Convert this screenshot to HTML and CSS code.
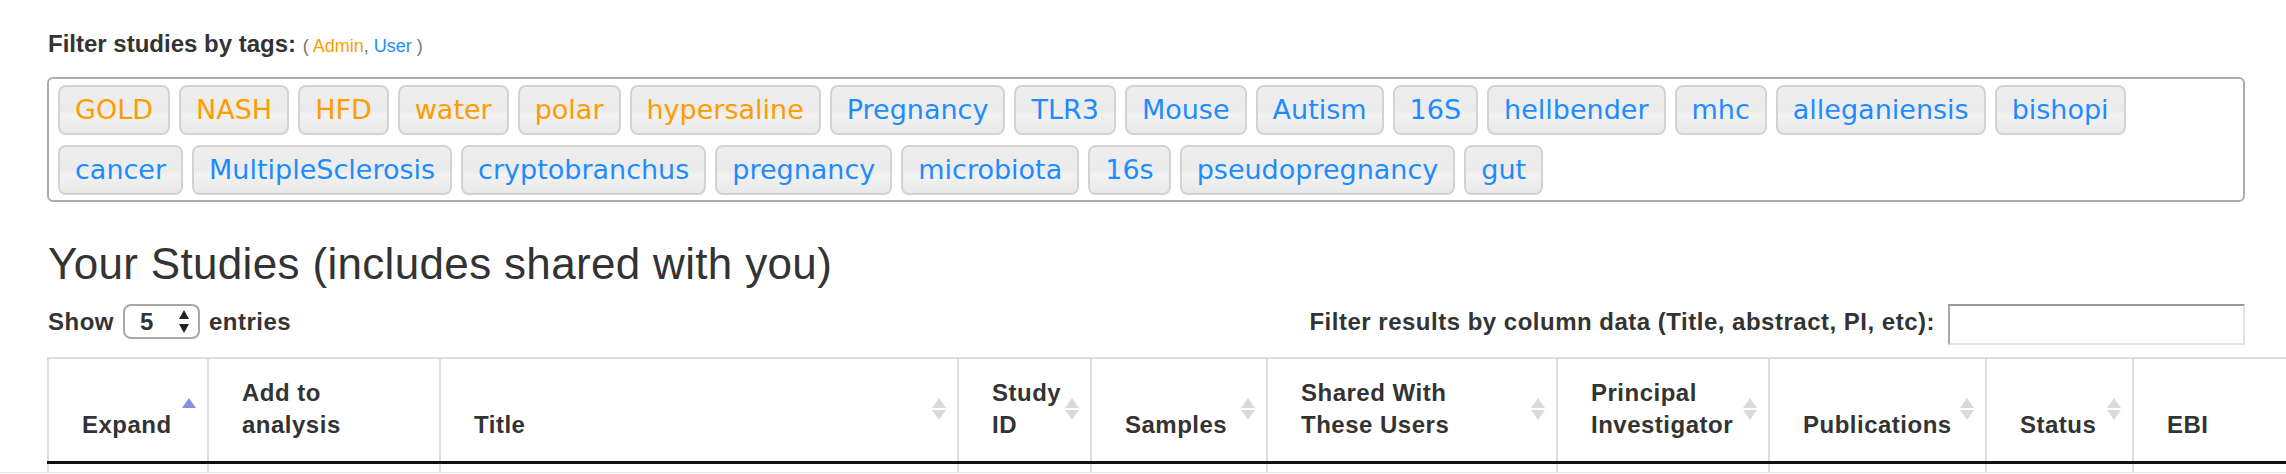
FILE: index.html
```html
<!DOCTYPE html>
<html lang="en">
<head>
<meta charset="utf-8">
<title>Your Studies</title>
<link rel="stylesheet" href="styles.css">
</head>
<body>
<div class="page">
  <div class="tag-label">Filter studies by tags: <span class="tag-legend">( <span class="role-admin">Admin</span>, <span class="role-user">User</span> )</span></div>
  <div class="tag-box">
    <span class="tag role-admin">GOLD</span>
    <span class="tag role-admin">NASH</span>
    <span class="tag role-admin">HFD</span>
    <span class="tag role-admin">water</span>
    <span class="tag role-admin">polar</span>
    <span class="tag role-admin">hypersaline</span>
    <span class="tag role-user">Pregnancy</span>
    <span class="tag role-user">TLR3</span>
    <span class="tag role-user">Mouse</span>
    <span class="tag role-user">Autism</span>
    <span class="tag role-user">16S</span>
    <span class="tag role-user">hellbender</span>
    <span class="tag role-user">mhc</span>
    <span class="tag role-user">alleganiensis</span>
    <span class="tag role-user">bishopi</span>
    <span class="tag role-user">cancer</span>
    <span class="tag role-user">MultipleSclerosis</span>
    <span class="tag role-user">cryptobranchus</span>
    <span class="tag role-user">pregnancy</span>
    <span class="tag role-user">microbiota</span>
    <span class="tag role-user">16s</span>
    <span class="tag role-user">pseudopregnancy</span>
    <span class="tag role-user">gut</span>
  </div>

  <h3 class="studies-title">Your Studies (includes shared with you)</h3>

  <div class="table-controls">
    <div class="length">Show<span class="select"><span class="select-value">5</span><svg class="select-arrows" width="10" height="23" viewBox="0 0 10 23"><polygon points="0,9 5,0 10,9" fill="#222"/><polygon points="0,14 10,14 5,23" fill="#222"/></svg></span>entries</div>
    <div class="search">Filter results by column data (Title, abstract, PI, etc):<span class="search-input"></span></div>
  </div>

  <table class="studies">
    <colgroup>
      <col class="c-expand"><col class="c-add"><col class="c-title"><col class="c-id"><col class="c-samples"><col class="c-shared"><col class="c-pi"><col class="c-pub"><col class="c-status"><col class="c-ebi">
    </colgroup>
    <thead>
      <tr>
        <th>Expand<svg class="sort" width="14" height="22" viewBox="0 0 14 22"><polygon points="0,10 7,0 14,10" fill="#8b8fe3"/></svg></th>
        <th>Add to<br>analysis<svg class="sort" width="14" height="22" viewBox="0 0 14 22"></svg></th>
        <th>Title<svg class="sort" width="14" height="22" viewBox="0 0 14 22"><polygon points="0,10 7,0 14,10" fill="#dadada"/><polygon points="0,12 14,12 7,22" fill="#dadada"/></svg></th>
        <th>Study<br>ID<svg class="sort" width="14" height="22" viewBox="0 0 14 22"><polygon points="0,10 7,0 14,10" fill="#dadada"/><polygon points="0,12 14,12 7,22" fill="#dadada"/></svg></th>
        <th>Samples<svg class="sort" width="14" height="22" viewBox="0 0 14 22"><polygon points="0,10 7,0 14,10" fill="#dadada"/><polygon points="0,12 14,12 7,22" fill="#dadada"/></svg></th>
        <th>Shared With<br>These Users<svg class="sort" width="14" height="22" viewBox="0 0 14 22"><polygon points="0,10 7,0 14,10" fill="#dadada"/><polygon points="0,12 14,12 7,22" fill="#dadada"/></svg></th>
        <th>Principal<br>Investigator<svg class="sort" width="14" height="22" viewBox="0 0 14 22"><polygon points="0,10 7,0 14,10" fill="#dadada"/><polygon points="0,12 14,12 7,22" fill="#dadada"/></svg></th>
        <th>Publications<svg class="sort" width="14" height="22" viewBox="0 0 14 22"><polygon points="0,10 7,0 14,10" fill="#dadada"/><polygon points="0,12 14,12 7,22" fill="#dadada"/></svg></th>
        <th>Status<svg class="sort" width="14" height="22" viewBox="0 0 14 22"><polygon points="0,10 7,0 14,10" fill="#dadada"/><polygon points="0,12 14,12 7,22" fill="#dadada"/></svg></th>
        <th>EBI<svg class="sort" width="14" height="22" viewBox="0 0 14 22"><polygon points="0,10 7,0 14,10" fill="#dadada"/><polygon points="0,12 14,12 7,22" fill="#dadada"/></svg></th>
      </tr>
    </thead>
    <tbody>
      <tr><td></td><td></td><td></td><td></td><td></td><td></td><td></td><td></td><td></td><td></td></tr>
    </tbody>
  </table>
</div>
<div class="bottom-rule"></div>
</body>
</html>
```

FILE: styles.css
```css
* { box-sizing: border-box; }

html, body {
  margin: 0;
  overflow: hidden;
  background: #fff;
}

body {
  font-family: "Liberation Sans", Arial, Helvetica, sans-serif;
  color: #333;
}

.page {
  padding: 29px 41px 0 47px;
}

.tag-label {
  font-size: 24px;
  line-height: 30px;
  font-weight: bold;
  margin: 0 0 16px 1px;
}

.tag-legend {
  font-size: 18px;
  font-weight: normal;
  color: #777;
}

.role-admin { color: #ff9c00; }
.role-user { color: #1e8cff; }

.tag-box {
  display: flex;
  flex-wrap: wrap;
  gap: 10px 9px;
  border: 2px solid #acacac;
  border-radius: 6px;
  padding: 6px 9px 5px;
}

.tag {
  font-family: "DejaVu Sans", Verdana, sans-serif;
  font-size: 27px;
  line-height: 46px;
  padding: 0 15px;
  border: 2px solid #d3d3d3;
  border-radius: 8px;
  background: linear-gradient(to bottom, #eeeeee 0%, #ebebeb 52%, #f2f2f2 60%, #e9e9e9 100%);
}

.studies-title {
  margin: 37px 0 15px 1px;
  font-size: 44px;
  line-height: 50px;
  font-weight: normal;
  letter-spacing: 0.33px;
  color: #333;
}

.table-controls {
  display: flex;
  justify-content: space-between;
  align-items: flex-start;
  font-size: 24px;
  font-weight: bold;
  letter-spacing: 0.5px;
  margin-bottom: 12px;
}

.length {
  display: flex;
  align-items: center;
  height: 35px;
  padding-left: 1px;
}

.select {
  display: flex;
  align-items: center;
  justify-content: space-between;
  width: 77px;
  height: 35px;
  margin: 0 9px 0 9px;
  padding: 0 9px 0 15px;
  border: 2px solid #a8a8a8;
  border-radius: 8px;
  background: #fff;
}

.select-arrows { display: block; }

.search {
  display: flex;
  align-items: flex-start;
  line-height: 35px;
}

.search-input {
  display: block;
  width: 297px;
  height: 41px;
  margin-left: 13px;
  border: 2px solid #e2e2e2;
  border-top-color: #9a9a9a;
  border-left-color: #a8a8a8;
  background: #fff;
}

.studies {
  table-layout: fixed;
  width: 2285px;
  border-collapse: collapse;
  border: 2px solid #dddddd;
}

.c-expand { width: 160px; }
.c-add { width: 232px; }
.c-title { width: 518px; }
.c-id { width: 133px; }
.c-samples { width: 176px; }
.c-shared { width: 290px; }
.c-pi { width: 212px; }
.c-pub { width: 217px; }
.c-status { width: 147px; }
.c-ebi { width: 200px; }

.studies th {
  position: relative;
  text-align: left;
  vertical-align: bottom;
  font-size: 24px;
  line-height: 32px;
  font-weight: bold;
  letter-spacing: 0.5px;
  color: #333;
  padding: 18px 30px 20px 33px;
  border: 2px solid #dddddd;
  border-bottom: 3px solid #111;
  white-space: nowrap;
}

.studies th .sort {
  position: absolute;
  right: 11px;
  top: 50%;
  margin-top: -12px;
}

.studies td {
  height: 40px;
  border: 2px solid #dddddd;
  border-top: none;
}

.bottom-rule {
  position: fixed;
  left: 0;
  right: 0;
  bottom: 0;
  height: 2px;
  border-top: 1px solid #e6e6e6;
  background: #fff;
}
```
